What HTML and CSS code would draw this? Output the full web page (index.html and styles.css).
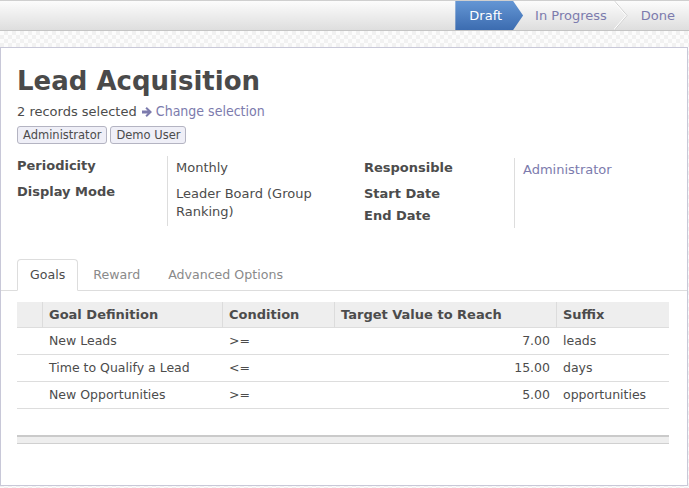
FILE: index.html
```html
<!DOCTYPE html>
<html>
<head>
<meta charset="utf-8">
<link rel="stylesheet" href="styles.css">
</head>
<body>
<div class="statusbar">
  <span class="stage stage-active">Draft</span>
  <span class="stage stage-mid">In Progress</span>
  <svg class="chevron" width="14" height="29" viewBox="0 0 14 29"><path d="M0.5 0 L13 14.5 L0.5 29" fill="none" stroke="#cfcfcf" stroke-width="1"/><path d="M-0.5 0 L12 14.5 L-0.5 29" fill="none" stroke="#ffffff" stroke-width="1"/></svg>
  <span class="stage stage-last">Done</span>
</div>
<div class="background">
  <div class="sheet">
    <h1 class="title">Lead Acquisition</h1>
    <div class="selection">2 records selected <svg class="arrow" width="11" height="10" viewBox="0 0 11 10"><path d="M0 3.6 H5.6 L3.4 1.4 L4.8 0 L10 5 L4.8 10 L3.4 8.6 L5.6 6.4 H0 Z" fill="#7c7bad"/></svg><a class="link condensed">Change selection</a></div>
    <div class="tags">
      <span class="tag">Administrator</span>
      <span class="tag">Demo User</span>
    </div>
    <div class="fields">
      <div class="group">
        <div class="lbl">Periodicity</div>
        <div class="val">Monthly</div>
        <div class="lbl">Display Mode</div>
        <div class="val">Leader Board (Group Ranking)</div>
      </div>
      <div class="group group-right">
        <div class="lbl">Responsible</div>
        <div class="val"><a class="link">Administrator</a></div>
        <div class="lbl">Start Date</div>
        <div class="val"></div>
        <div class="lbl">End Date</div>
        <div class="val"></div>
      </div>
    </div>
    <ul class="tabs">
      <li class="tab tab-active">Goals</li>
      <li class="tab">Reward</li>
      <li class="tab">Advanced Options</li>
    </ul>
    <table class="list">
      <colgroup>
        <col class="c-handle"><col class="c-goal"><col class="c-cond"><col class="c-target"><col class="c-suffix">
      </colgroup>
      <thead>
        <tr><th class="th-first"></th><th>Goal Definition</th><th>Condition</th><th>Target Value to Reach</th><th>Suffix</th></tr>
      </thead>
      <tbody>
        <tr><td></td><td>New Leads</td><td>&gt;=</td><td class="num">7.00</td><td>leads</td></tr>
        <tr><td></td><td>Time to Qualify a Lead</td><td>&lt;=</td><td class="num">15.00</td><td>days</td></tr>
        <tr><td></td><td>New Opportunities</td><td>&gt;=</td><td class="num">5.00</td><td>opportunities</td></tr>
        <tr class="spacer"><td colspan="5"></td></tr>
      </tbody>
      <tfoot>
        <tr><td colspan="5"></td></tr>
      </tfoot>
    </table>
  </div>
</div>
</body>
</html>
```
FILE: styles.css
```css
html, body {
  margin: 0;
  padding: 0;
}
body {
  font-family: "DejaVu Sans", "Liberation Sans", sans-serif;
  font-size: 13px;
  color: #4c4c4c;
  width: 689px;
  overflow: hidden;
}
.statusbar {
  display: flex;
  justify-content: flex-end;
  align-items: stretch;
  height: 29px;
  border-top: 1px solid #cfcfcf;
  border-bottom: 1px solid #c4c4c4;
  background: linear-gradient(#fcfcfc, #dedede);
}
.stage {
  line-height: 29px;
  color: #7c7bad;
  white-space: nowrap;
}
.stage-active {
  color: #ffffff;
  padding: 0 21px 0 14px;
  background: linear-gradient(#6496d4, #3c6cb0);
  clip-path: polygon(0 0, calc(100% - 10px) 0, 100% 50%, calc(100% - 10px) 100%, 0 100%);
}
.stage-mid {
  padding: 0 7px 0 12px;
}
.chevron {
  display: block;
  flex: none;
}
.stage-last {
  padding: 0 14px 0 13px;
}
.background {
  padding-top: 16px;
  background-color: #fbfbfb;
  background-image: conic-gradient(#f1f1f1 25%, #fcfcfc 0 50%, #f1f1f1 0 75%, #fcfcfc 0);
  background-size: 8px 8px;
  height: 456px;
}
.sheet {
  box-sizing: border-box;
  width: 688px;
  height: 439px;
  background: #ffffff;
  border: 1px solid #c8c8d8;
  padding: 17px 18px 0 16px;
}
.title {
  margin: 0;
  font-size: 26px;
  line-height: 32px;
  font-weight: bold;
  color: #4a4a4a;
}
.selection {
  margin-top: 5px;
  line-height: 18px;
  white-space: nowrap;
}
.arrow {
  vertical-align: -1px;
  margin: 0 3px 0 1px;
}
.link {
  color: #7c7bad;
}
.condensed {
  font-size: 14px;
  font-stretch: condensed;
  font-family: "DejaVu Sans Condensed", "DejaVu Sans", sans-serif;
}
.tags {
  margin-top: 5px;
  display: flex;
  gap: 3px;
}
.tag {
  font-size: 11.5px;
  line-height: 16px;
  padding: 0 5px;
  border: 1px solid #b4b4c2;
  border-radius: 3px;
  background: #efeff7;
  color: #4c4c4c;
}
.fields {
  margin-top: 12px;
  display: grid;
  grid-template-columns: 347px 1fr;
  align-items: start;
}
.group {
  display: grid;
  grid-template-columns: 151px 1fr;
}
.group-right {
  margin-top: 2px;
}
.lbl {
  font-weight: bold;
  line-height: 18px;
  padding: 1px 0 3px;
  border-right: 1px solid #dddddd;
}
.val {
  line-height: 18px;
  padding: 3px 8px 5px;
}
.tabs {
  list-style: none;
  display: flex;
  margin: 31px -18px 0 -16px;
  padding: 0 0 0 16px;
  border-bottom: 1px solid #dddddd;
}
.tab {
  font-size: 12.6px;
  line-height: 30px;
  padding: 0 12px;
  margin-right: 2px;
  margin-bottom: -1px;
  border: 1px solid transparent;
  border-radius: 4px 4px 0 0;
  color: #8a8a8a;
}
.tab-active {
  color: #4c4c4c;
  border-color: #dddddd;
  border-bottom-color: #ffffff;
  background: #ffffff;
}
.list {
  margin-top: 11px;
  width: 652px;
  border-collapse: separate;
  border-spacing: 0;
  table-layout: fixed;
  font-size: 12.5px;
}
.c-handle { width: 25px; }
.c-goal { width: 180px; }
.c-cond { width: 112px; }
.c-target { width: 222px; }
.c-suffix { width: 113px; }
.list th {
  background: #eeeeee;
  height: 25px;
  padding: 0 7px 0 6px;
  text-align: left;
  font-size: 13px;
  font-weight: bold;
  border-left: 1px solid #dcdcdc;
  border-bottom: 1px solid #dddddd;
  white-space: nowrap;
}
.list th.th-first {
  border-left: none;
}
.list td {
  height: 24px;
  padding: 0 7px 2px;
  border-bottom: 1px solid #dddddd;
  white-space: nowrap;
}
.list td.num {
  text-align: right;
  padding-right: 6px;
}
.list .spacer td {
  border-bottom: none;
  height: 26px;
  padding: 0;
}
.list tfoot td {
  height: 6px;
  padding: 0;
  background: #eeeeee;
  border-top: 2px solid #cacaca;
  border-bottom: 1px solid #d0d0d0;
}
```
